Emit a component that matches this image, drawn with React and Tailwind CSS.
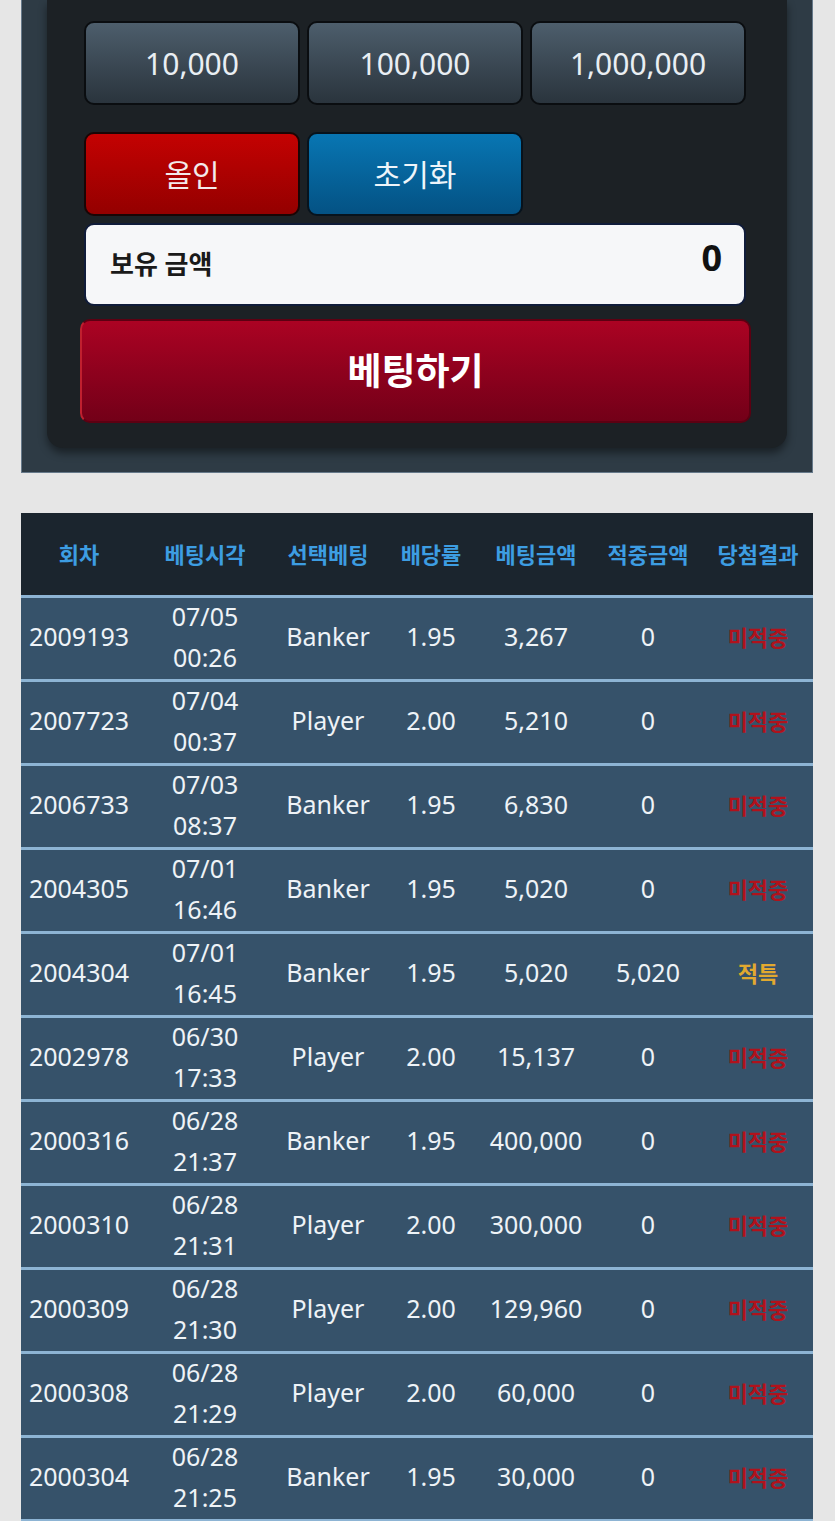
const CHIPS = ["10,000", "100,000", "1,000,000"];

const HEADERS = ["회차", "베팅시각", "선택베팅", "배당률", "베팅금액", "적중금액", "당첨결과"];

const ROWS = [
  ["2009193", "07/05", "00:26", "Banker", "1.95", "3,267", "0", "lose"],
  ["2007723", "07/04", "00:37", "Player", "2.00", "5,210", "0", "lose"],
  ["2006733", "07/03", "08:37", "Banker", "1.95", "6,830", "0", "lose"],
  ["2004305", "07/01", "16:46", "Banker", "1.95", "5,020", "0", "lose"],
  ["2004304", "07/01", "16:45", "Banker", "1.95", "5,020", "5,020", "special"],
  ["2002978", "06/30", "17:33", "Player", "2.00", "15,137", "0", "lose"],
  ["2000316", "06/28", "21:37", "Banker", "1.95", "400,000", "0", "lose"],
  ["2000310", "06/28", "21:31", "Player", "2.00", "300,000", "0", "lose"],
  ["2000309", "06/28", "21:30", "Player", "2.00", "129,960", "0", "lose"],
  ["2000308", "06/28", "21:29", "Player", "2.00", "60,000", "0", "lose"],
  ["2000304", "06/28", "21:25", "Banker", "1.95", "30,000", "0", "lose"],
];

const FONT = { fontFamily: '"Noto Sans", "Noto Sans CJK KR", sans-serif' };

const GRID = "grid grid-cols-[116px_136px_110px_96px_114px_110px_110px]";

const App = () => {
  return (
    <div className="min-h-[1521px] bg-[#e6e6e6] px-[21px] text-[#eef3f7]" style={FONT}>
      {/* Bet panel */}
      <div className="w-[792px] bg-[#2e3b45] border border-t-0 border-[#66798a] px-[25px] pb-[24px]">
        <div className="bg-[#1c2125] rounded-b-2xl shadow-[0_5px_8px_rgba(0,0,0,0.45)] pt-[21px] pb-[25px] pl-[37px] pr-[41px]">
          {/* Chip buttons */}
          <div className="grid grid-cols-3 gap-[7px]">
            {CHIPS.map((c) => (
              <button
                key={c}
                className="h-[84px] rounded-[10px] border-2 border-[#0a0d10] bg-gradient-to-b from-[#4d5e6c] to-[#2a343d] text-[30px] text-[#e9eef3]"
              >
                {c}
              </button>
            ))}
          </div>

          {/* All-in / reset */}
          <div className="grid grid-cols-3 gap-[7px] mt-[27px]">
            <button className="h-[84px] rounded-[10px] border-2 border-[#1a0505] bg-gradient-to-b from-[#c40202] to-[#940000] text-[30px] text-[#f3eaea]">
              올인
            </button>
            <button className="h-[84px] rounded-[10px] border-2 border-[#07131d] bg-gradient-to-b from-[#0876b3] to-[#045284] text-[30px] text-[#eef5fa]">
              초기화
            </button>
          </div>

          {/* Balance */}
          <div className="mt-[7px] h-[83px] rounded-[10px] border-2 border-[#101c3a] bg-[#f6f7f9] flex items-center justify-between pl-[24px] pr-[22px]">
            <span className="text-[26px] font-bold text-[#1a1a1a]">보유 금액</span>
            <span className="text-[36px] font-bold text-[#111] -mt-[14px]">0</span>
          </div>

          {/* Bet button */}
          <button className="mt-[13px] -ml-[4px] w-[671px] h-[104px] rounded-[10px] border-2 border-[#5c0012] border-l-[#c0202f] bg-gradient-to-b from-[#ab0323] to-[#730018] text-[37px] font-bold text-white">
            베팅하기
          </button>
        </div>
      </div>

      {/* History table */}
      <div className="w-[792px] mt-[40px]">
        <div className={`${GRID} h-[82px] items-center bg-[#1b252e] text-[22px] font-bold text-[#3d9de2]`}>
          {HEADERS.map((h) => (
            <div key={h} className="text-center">
              {h}
            </div>
          ))}
        </div>
        {ROWS.map((r) => (
          <div
            key={r[0]}
            className={`${GRID} h-[84px] items-center border-t-[3px] border-[#8db4d4] bg-[#36526a] text-[25px]`}
          >
            <div className="text-center -mt-[3px]">{r[0]}</div>
            <div className="text-center leading-[41px] -mt-[3px]">
              <div>{r[1]}</div>
              <div>{r[2]}</div>
            </div>
            <div className="text-center -mt-[3px]">{r[3]}</div>
            <div className="text-center -mt-[3px]">{r[4]}</div>
            <div className="text-center -mt-[3px]">{r[5]}</div>
            <div className="text-center -mt-[3px]">{r[6]}</div>
            <div
              className={
                r[7] === "special"
                  ? "text-center text-[22px] font-semibold text-[#e2a92f] -mt-[3px]"
                  : "text-center text-[22px] font-semibold text-[#b0121c] -mt-[3px]"
              }
            >
              {r[7] === "special" ? "적특" : "미적중"}
            </div>
          </div>
        ))}
        <div className="h-[3px] bg-[#8db4d4]" />
      </div>
    </div>
  );
};

export default App;
